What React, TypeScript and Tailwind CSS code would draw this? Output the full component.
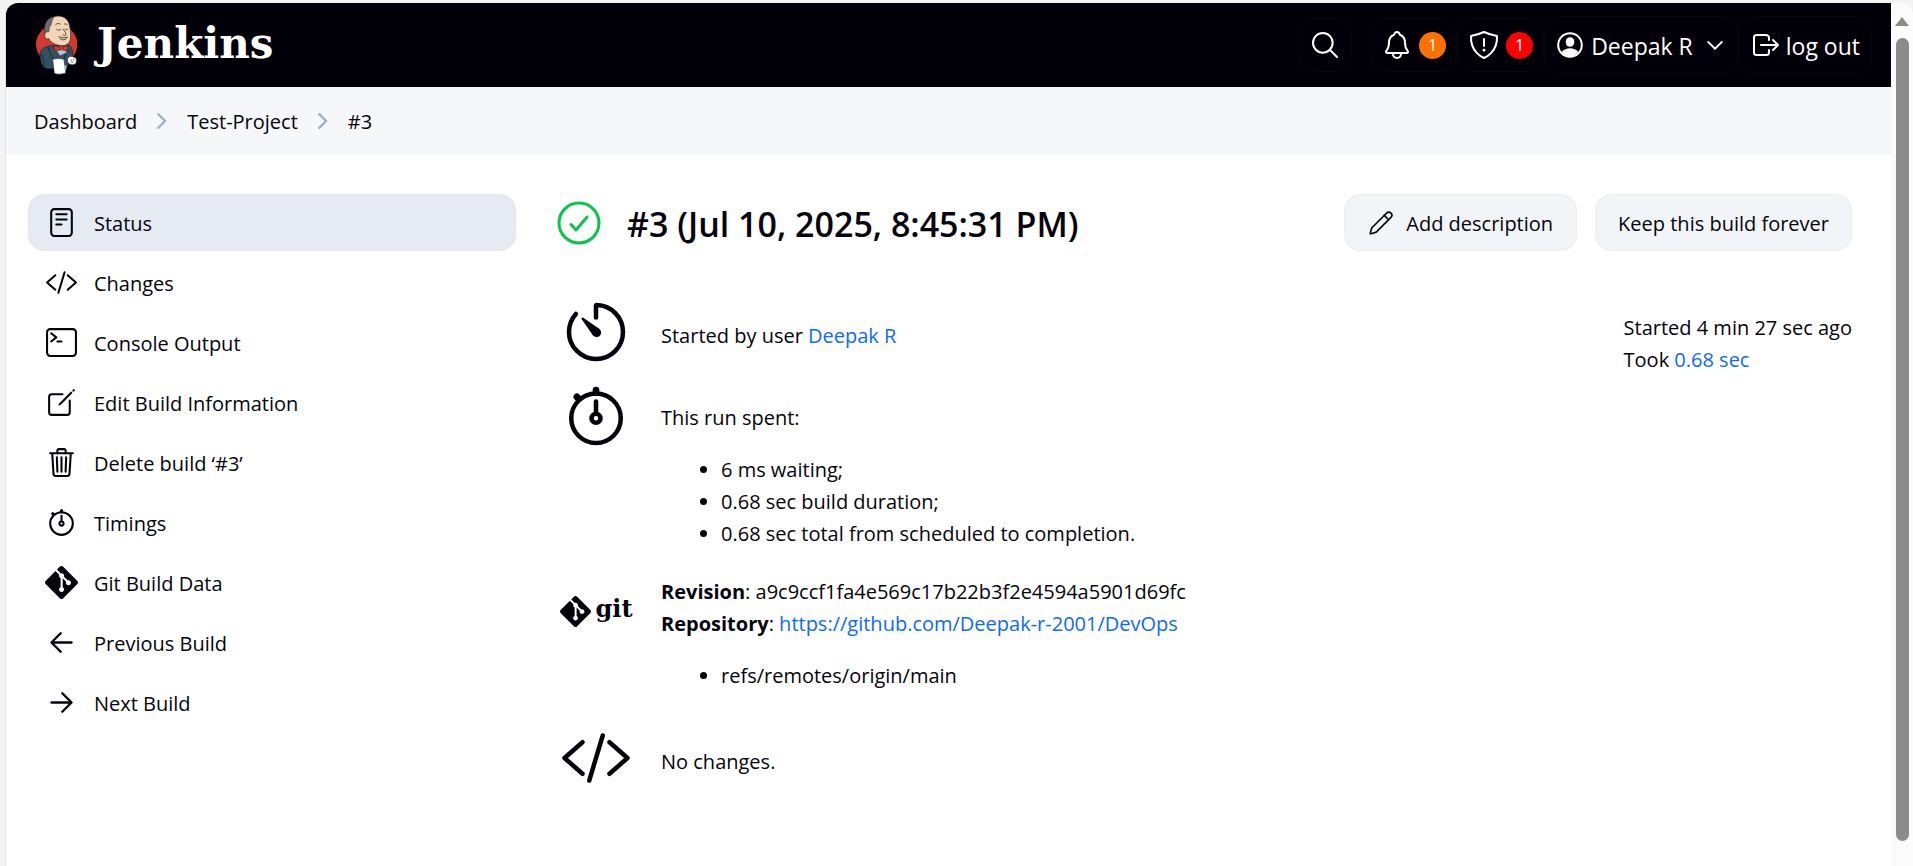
import type { ReactNode } from "react";
import { Pencil } from "lucide-react";
import { SiGit } from "react-icons/si";

type IconProps = { className?: string; width?: number; children?: ReactNode };

function Line({ className = "size-[33px]", width = 32, children }: IconProps) {
  return (
    <svg
      viewBox="0 0 512 512"
      className={`shrink-0 ${className}`}
      fill="none"
      stroke="currentColor"
      strokeWidth={width}
      strokeLinecap="round"
      strokeLinejoin="round"
      aria-hidden="true"
    >
      {children}
    </svg>
  );
}

const ReaderIcon = () => (
  <Line>
    <rect x="96" y="48" width="320" height="416" rx="48" />
    <path d="M176 128h160M176 208h160M176 288h80" />
  </Line>
);

const CodeIcon = ({ className }: IconProps) => (
  <Line className={className}>
    <path d="M160 368L32 256l128-112M352 368l128-112-128-112M304 96l-96 320" />
  </Line>
);

const TerminalIcon = () => (
  <Line>
    <rect x="32" y="48" width="448" height="416" rx="48" />
    <path d="M96 112l80 64-80 64M192 240h64" />
  </Line>
);

const EditIcon = () => (
  <Line>
    <path d="M384 224v184a40 40 0 01-40 40H104a40 40 0 01-40-40V168a40 40 0 0140-40h167.48" />
    <path
      stroke="none"
      fill="currentColor"
      d="M459.94 53.25a16.06 16.06 0 00-23.22-.56L424.35 65a8 8 0 000 11.31l11.34 11.32a8 8 0 0011.34 0l12.06-12c6.1-6.09 6.67-16.01.85-22.38zM399.34 90L218.82 270.2a9 9 0 00-2.31 3.93L208.16 299a3.91 3.91 0 004.86 4.86l24.85-8.35a9 9 0 003.93-2.31L422 112.66a9 9 0 000-12.66l-9.95-10a9 9 0 00-12.71 0z"
    />
  </Line>
);

const TrashIcon = () => (
  <Line>
    <path d="M112 112l20 320c.95 18.49 14.4 32 32 32h184c17.67 0 30.87-13.51 32-32l20-320M80 112h352" />
    <path d="M192 112V72a23.93 23.93 0 0124-24h80a23.93 23.93 0 0124 24v40M256 176v224M184 176l8 224M328 176l-8 224" />
  </Line>
);

const StopwatchIcon = ({ className }: IconProps) => (
  <Line className={className}>
    <path d="M256 232v-80" />
    <path strokeWidth="48" d="M256 88V72M132 132l-12-12" />
    <circle cx="256" cy="272" r="32" />
    <circle cx="256" cy="272" r="176" />
  </Line>
);

const TimerIcon = () => (
  <Line className="size-[72px]">
    <path d="M112.91 128A191.85 191.85 0 0064 254c-1.18 106.35 85.65 193.8 192 194 106.2.2 192-85.83 192-192 0-104.54-83.55-189.61-187.5-192a4.36 4.36 0 00-4.5 4.37V152" />
    <path
      stroke="none"
      fill="currentColor"
      d="M233.38 278.63l-79-113a8.13 8.13 0 0111.32-11.32l113 79a32.5 32.5 0 01-37.25 53.26 33.21 33.21 0 01-8.07-7.94z"
    />
  </Line>
);

const BackIcon = () => (
  <Line width={36}>
    <path d="M244 400L100 256l144-144M120 256h292" />
  </Line>
);

const ForwardIcon = () => (
  <Line width={36}>
    <path d="M268 112l144 144-144 144M392 256H100" />
  </Line>
);

const GitIcon = () => <SiGit className="size-[33px] shrink-0" aria-hidden="true" />;

function Butler() {
  return (
    <svg viewBox="0 0 165 210" className="h-[70px] w-[55px] shrink-0" aria-hidden="true">
      <ellipse cx="80" cy="103" rx="62" ry="60" fill="#d33833" />
      <path
        d="M54 108c-10 3-20 10-23 18-3 12 3 38 10 46 10 6 24 5 34 3l34-3c6-6 8-14 8-20l10-4c3-10 1-32-6-40-6-4-12-4-20-4z"
        fill="#335061"
        stroke="#1a1f24"
        strokeWidth="2"
      />
      <path d="M54 112l16 38M34 132c6 10 8 22 9 38M112 116c-4 12-8 22-10 32" fill="none" stroke="#16262f" strokeWidth="2.5" />
      <path d="M72 112l18 26 20-10 2-14-20-6z" fill="#a9c9d6" stroke="#2b4653" strokeWidth="2" />
      <path
        d="M48 46c4-18 18-27 36-28 20 0 32 12 35 30 3 14 4 28 2 40-3 14-14 20-26 19-16-1-32-8-38-20-10 0-16-16-9-41z"
        fill="#f0d6b7"
        stroke="#2a211c"
        strokeWidth="2"
      />
      <path d="M73 20c-18 2-29 16-29 36 0 8 1 13 4 18 2-10 6-12 9-9 0-10 1-16 6-20 2-10 4-18 10-25z" fill="#6d6b6d" stroke="#2a211c" strokeWidth="1.5" />
      <path d="M55 66c-7-2-12 4-11 12 1 7 8 11 13 8" fill="#f0d6b7" stroke="#2a211c" strokeWidth="2" />
      <path
        d="M77 44c4-4 9-5 13-2M103 42c4-2 7 0 9 3M80 58c4 4 9 4 12 0M105 57c3 3 7 3 9 0M100 58c4 6 9 12 8 16-3 3-6 3-9 1M86 80c9 4 18 5 27 1M90 86c6 5 14 5 19 0"
        fill="none"
        stroke="#3b2c22"
        strokeWidth="2.5"
        strokeLinecap="round"
      />
      <path d="M74 106l20 7 16-7c4 6 3 13 2 18l-17-6-19 6c-4-6-4-12-2-18z" fill="#d33833" stroke="#5a1210" strokeWidth="2" />
      <rect x="89" y="108" width="9" height="12" rx="2" fill="#ef3d3a" stroke="#5a1210" strokeWidth="1.5" />
      <path d="M68 148c11-3 23-3 34 0l5 41c-10 4-24 5-34 1z" fill="#fff" stroke="#33373a" strokeWidth="2" />
      <path d="M103 166l7 1-3 18z" fill="#c9ccce" />
      <path
        d="M114 143c6-5 12-5 16-2l7 2c3 5 3 13 0 18-6 4-14 4-19 1-6-5-7-13-4-19z"
        fill="#fff"
        stroke="#33373a"
        strokeWidth="2"
      />
      <path d="M121 150l6 3M123 157h6M131 146v6" stroke="#33373a" strokeWidth="2" />
    </svg>
  );
}

function Badge({ tone, children }: { tone: string; children: ReactNode }) {
  return (
    <span className={`flex size-[27px] items-center justify-center rounded-full text-base leading-none ${tone}`}>
      {children}
    </span>
  );
}

function Header() {
  return (
    <header className="flex h-[84px] shrink-0 items-center justify-between rounded-tl-xl bg-[#010009] pr-[19px] pl-6 text-white">
      <a href="#home" className="flex items-center gap-3">
        <Butler />
        <span className="pb-0.5 font-['DejaVu_Serif',serif] text-[42px] leading-none font-bold">Jenkins</span>
      </a>
      <div className="flex items-center">
        <button
          type="button"
          aria-label="Search"
          className="mr-[18px] flex h-[54px] w-[54px] items-center justify-center rounded-2xl border border-[#07070f]"
        >
          <Line className="size-8">
            <path d="M221.09 64a157.09 157.09 0 10157.09 157.09A157.1 157.1 0 00221.09 64zM338.29 338.29L448 448" />
          </Line>
        </button>
        <button
          type="button"
          aria-label="Notifications"
          className="flex h-[54px] items-center gap-[6px] rounded-2xl border border-[#07070f] px-[10px]"
        >
          <Line className="size-8">
            <path d="M427.68 351.43C402 320 383.87 304 383.87 217.35 383.87 138 343.35 109.73 310 96c-4.43-1.82-8.6-6-9.95-10.55C294.2 65.54 277.8 48 256 48s-38.21 17.55-44 37.47c-1.35 4.6-5.52 8.71-9.95 10.53-33.39 13.75-73.87 41.92-73.87 121.35C128.13 304 110 320 84.32 351.43 73.68 364.45 83 384 101.61 384h308.88c18.51 0 27.77-19.61 17.19-32.57zM320 384v16a64 64 0 01-128 0v-16" />
          </Line>
          <Badge tone="bg-[#fe7100]">1</Badge>
        </button>
        <button
          type="button"
          aria-label="Security warnings"
          className="flex h-[54px] items-center gap-[6px] rounded-2xl border border-[#07070f] px-[10px]"
        >
          <Line className="size-8">
            <path d="M463.1 112.37C373.68 96.33 336.71 84.45 256 48c-80.71 36.45-117.68 48.33-207.1 64.37C32.7 369.13 240.58 457.79 256 464c15.42-6.21 223.3-94.87 207.1-351.63zM256 160v112" />
            <circle cx="256" cy="338" r="22" fill="currentColor" stroke="none" />
          </Line>
          <Badge tone="bg-[#fe0000]">1</Badge>
        </button>
        <button
          type="button"
          className="flex h-[58px] items-center gap-2 rounded-2xl border border-[#07070f] px-3 text-[23px]"
        >
          <svg viewBox="0 0 26 26" className="size-[26px] shrink-0" aria-hidden="true">
            <circle cx="13" cy="13" r="11.8" fill="none" stroke="currentColor" strokeWidth="2" />
            <ellipse cx="13" cy="10" rx="4.3" ry="4.8" fill="currentColor" />
            <path d="M4.8 20.2c2-3 5-4 8.2-4s6.2 1 8.2 4A11.5 11.5 0 0 1 13 24.5 11.5 11.5 0 0 1 4.8 20.2z" fill="currentColor" />
          </svg>
          <span className="pt-0.5">Deepak R</span>
          <Line className="ml-1 size-5" width={48}>
            <path d="M80 176l176 176 176-176" />
          </Line>
        </button>
        <a href="#logout" className="flex h-[58px] items-center gap-1 rounded-2xl border border-[#07070f] px-[11px] text-[23px]">
          <Line className="size-8">
            <path d="M304 336v40a40 40 0 01-40 40H104a40 40 0 01-40-40V136a40 40 0 0140-40h152c22.09 0 48 17.91 48 40v40M368 336l80-80-80-80M176 256h256" />
          </Line>
          <span className="pt-0.5">log out</span>
        </a>
      </div>
    </header>
  );
}

const CrumbArrow = () => (
  <Line className="size-5 text-[#9bb1d0]" width={60}>
    <path d="M160 80l176 176-176 176" />
  </Line>
);

function Breadcrumbs() {
  return (
    <nav aria-label="Breadcrumb" className="flex h-[68px] shrink-0 items-center gap-[15px] bg-[#f5f7f9] px-7">
      <a href="#dashboard" className="pt-0.5">Dashboard</a>
      <CrumbArrow />
      <a href="#project" className="pt-0.5">Test-Project</a>
      <CrumbArrow />
      <a href="#build" className="pt-0.5">#3</a>
    </nav>
  );
}

const tasks: { label: string; icon: ReactNode; active?: boolean }[] = [
  { label: "Status", icon: <ReaderIcon />, active: true },
  { label: "Changes", icon: <CodeIcon /> },
  { label: "Console Output", icon: <TerminalIcon /> },
  { label: "Edit Build Information", icon: <EditIcon /> },
  { label: "Delete build ‘#3’", icon: <TrashIcon /> },
  { label: "Timings", icon: <StopwatchIcon /> },
  { label: "Git Build Data", icon: <GitIcon /> },
  { label: "Previous Build", icon: <BackIcon /> },
  { label: "Next Build", icon: <ForwardIcon /> },
];

function Sidebar() {
  return (
    <nav aria-label="Build" className="flex w-[488px] shrink-0 flex-col gap-[3px]">
      {tasks.map((task) => (
        <a
          key={task.label}
          href="#task"
          aria-current={task.active ? "page" : undefined}
          className={`flex h-[57px] items-center gap-4 rounded-2xl border px-4 ${
            task.active ? "border-[#e2e7ef] bg-[#e6eaf3]" : "border-transparent"
          }`}
        >
          {task.icon}
          <span className="pt-0.5">{task.label}</span>
        </a>
      ))}
    </nav>
  );
}

function Row({ icon, className, children }: { icon: ReactNode; className: string; children: ReactNode }) {
  return (
    <div className={`flex gap-[26px] ${className}`}>
      <div className="flex h-16 w-[78px] shrink-0 items-center justify-center">{icon}</div>
      <div className="leading-8">{children}</div>
    </div>
  );
}

function GitLogo() {
  return (
    <span className="flex items-center gap-[5px] pt-1.5">
      <SiGit className="size-[31px]" aria-hidden="true" />
      <span className="pb-1 font-['DejaVu_Serif',serif] text-2xl leading-none font-bold">git</span>
    </span>
  );
}

function Build() {
  return (
    <main className="min-w-0 flex-1">
      <div className="flex items-center justify-between">
        <div className="flex items-center gap-[26px]">
          <svg
            viewBox="0 0 44 44"
            className="size-11 shrink-0 text-[#0ac44c]"
            fill="none"
            stroke="currentColor"
            strokeWidth="3"
            strokeLinecap="round"
            strokeLinejoin="round"
            role="img"
            aria-label="Success"
          >
            <circle cx="22" cy="22" r="20" />
            <path d="M14 23.5L19 29 30 16" />
          </svg>
          <h1 className="pt-0.5 text-[34px] leading-none font-semibold">#3 (Jul 10, 2025, 8:45:31 PM)</h1>
        </div>
        <div className="flex gap-[18px]">
          <button
            type="button"
            className="flex h-[57px] items-center gap-3 rounded-2xl border-2 border-[#edf1f5] bg-[#f2f5f8] px-[22px]"
          >
            <Pencil className="size-[26px]" strokeWidth={1.5} aria-hidden="true" />
            <span className="pt-0.5">Add description</span>
          </button>
          <button type="button" className="h-[57px] rounded-2xl border-2 border-[#edf1f5] bg-[#f2f5f8] px-[21px]">
            <span className="block pt-0.5">Keep this build forever</span>
          </button>
        </div>
      </div>

      <div className="flex items-start justify-between pt-[49px]">
        <div>
          <Row icon={<TimerIcon />} className="">
            <p className="pt-5">
              Started by user <a href="#user" className="text-[#0b6aff]">Deepak R</a>
            </p>
          </Row>
          <Row icon={<StopwatchIcon className="size-[72px]" />} className="mt-5">
            <p className="pt-[18px]">This run spent:</p>
            <ul className="list-disc pt-5 pl-[60px]">
              <li>6 ms waiting;</li>
              <li>0.68 sec build duration;</li>
              <li>0.68 sec total from scheduled to completion.</li>
            </ul>
          </Row>
          <Row icon={<GitLogo />} className="mt-[26px]">
            <p>
              <b>Revision</b>: a9c9ccf1fa4e569c17b22b3f2e4594a5901d69fc
            </p>
            <p>
              <b>Repository</b>:{" "}
              <a href="#repository" className="text-[#0b6aff]">https://github.com/Deepak-r-2001/DevOps</a>
            </p>
            <ul className="list-disc pt-5 pl-[60px]">
              <li>refs/remotes/origin/main</li>
            </ul>
          </Row>
          <Row icon={<CodeIcon className="size-[72px]" />} className="mt-[34px]">
            <p className="pt-5">No changes.</p>
          </Row>
        </div>
        <div className="pt-3 leading-8">
          <p>Started 4 min 27 sec ago</p>
          <p>
            Took <a href="#trend" className="text-[#0b6aff]">0.68 sec</a>
          </p>
        </div>
      </div>
    </main>
  );
}

function ScrollRail() {
  return (
    <div
      className="flex w-[22px] shrink-0 flex-col items-center gap-3 rounded-tr-xl bg-[#fbfbfb] pt-[14px] pb-[25px]"
      aria-hidden="true"
    >
      <svg viewBox="0 0 14 9" className="h-[9px] w-[14px] shrink-0 fill-[#8b8b8b]">
        <path d="M7 0L14 9H0z" />
      </svg>
      <div className="w-[13px] flex-1 rounded-full bg-[#8b8b8b]" />
    </div>
  );
}

export default function App() {
  return (
    <div className="flex min-h-screen bg-[#f3f3f4] pt-[3px] pl-[5px] font-['Open_Sans','Noto_Sans',sans-serif] text-xl text-[#04040d]">
      <div className="flex min-w-0 flex-1 flex-col rounded-tl-xl border-l border-[#e2e2e4] bg-white">
        <Header />
        <Breadcrumbs />
        <div className="flex flex-1 gap-[41px] bg-white pt-[39px] pr-[39px] pl-[22px]">
          <Sidebar />
          <Build />
        </div>
      </div>
      <ScrollRail />
    </div>
  );
}
